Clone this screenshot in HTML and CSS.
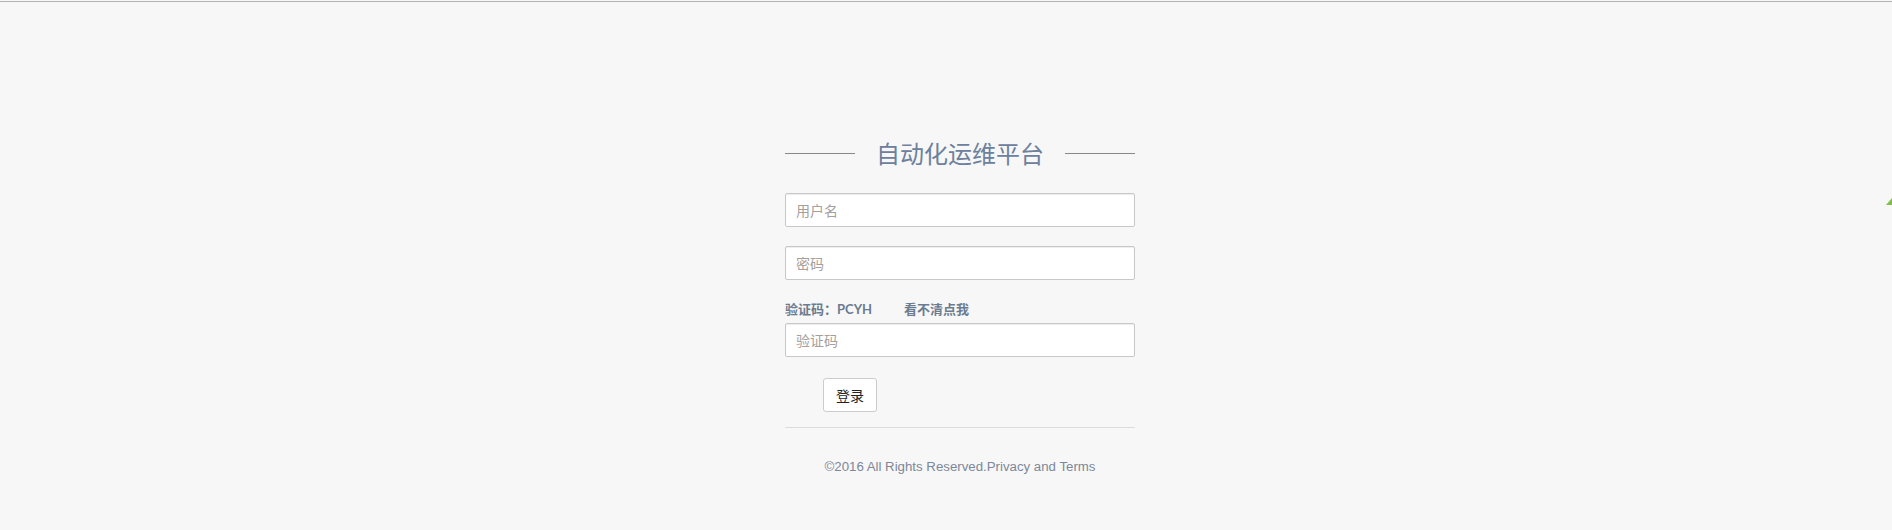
FILE: index.html
```html
<!DOCTYPE html>
<html lang="zh-CN">
<head>
<meta charset="utf-8">
<title>自动化运维平台</title>
<link rel="stylesheet" href="styles.css">
</head>
<body>
<div class="topline"></div>
<div class="login">
  <div class="title-row">
    <span class="title-line"></span>
    <h1 class="title">自动化运维平台</h1>
    <span class="title-line"></span>
  </div>
  <form class="form">
    <input class="field field-first" type="text" placeholder="用户名">
    <input class="field field-second" type="password" placeholder="密码">
    <div class="captcha-row">
      <span class="captcha-label">验证码：PCYH</span>
      <a class="captcha-refresh">看不清点我</a>
    </div>
    <input class="field field-captcha" type="text" placeholder="验证码">
    <button class="btn" type="button">登录</button>
  </form>
  <div class="divider"></div>
  <p class="footer">©2016 All Rights Reserved.Privacy and Terms</p>
</div>
<div class="leaf"></div>
</body>
</html>
```

FILE: styles.css
```css
html, body {
  margin: 0;
  padding: 0;
  background: #f7f7f7;
  height: 100%;
  overflow: hidden;
}
body {
  font-family: "Liberation Sans", Arial, "Noto Sans CJK SC", sans-serif;
  position: relative;
}
.topline {
  margin-top: 1px;
  height: 1px;
  background: #b3b3b3;
}
.login {
  width: 350px;
  margin-left: calc(50% - 161px);
}
.title-row {
  margin-top: 134px;
  height: 34px;
  display: flex;
  align-items: center;
  justify-content: space-between;
}
.title-line {
  width: 70px;
  height: 1px;
  background: #888;
}
.title {
  margin: 0;
  font-size: 24px;
  font-weight: normal;
  line-height: 34px;
  color: #6d809d;
  font-family: "Noto Sans CJK SC", sans-serif;
  letter-spacing: 0;
}
.form {
  display: flex;
  flex-direction: column;
  align-items: flex-start;
  margin: 0;
}
.field {
  box-sizing: border-box;
  width: 350px;
  height: 34px;
  padding: 0 10px;
  border: 1px solid #c8c8c8;
  border-radius: 2px;
  background: #fff;
  box-shadow: inset 0 1px 1px rgba(0,0,0,0.075);
  font-size: 14px;
  font-family: "Noto Sans CJK SC", sans-serif;
  color: #555;
  outline: none;
}
.field::placeholder {
  color: #a5a09b;
}
.field-first { margin-top: 23px; }
.field-second { margin-top: 19px; }
.captcha-row {
  margin-top: 19px;
  height: 20px;
  line-height: 20px;
  display: flex;
  gap: 32px;
  font-size: 13px;
  font-weight: bold;
  color: #6b7b90;
  font-family: "Lato", "Noto Sans CJK SC", sans-serif;
}
.captcha-refresh {
  color: #6b7b90;
  cursor: pointer;
}
.field-captcha { margin-top: 4px; }
.btn {
  margin-top: 21px;
  margin-left: 38px;
  width: 54px;
  height: 34px;
  background: #fff;
  border: 1px solid #ccc;
  border-radius: 3px;
  font-size: 14px;
  color: #222;
  font-family: "Noto Sans CJK SC", sans-serif;
  padding: 0;
}
.divider {
  margin-top: 15px;
  height: 1px;
  background: #dcdcdc;
}
.footer {
  margin: 29px 0 0;
  line-height: 20px;
  text-align: center;
  font-size: 13.25px;
  color: #7c8799;
}
.leaf {
  position: absolute;
  right: 0;
  top: 198px;
  width: 0;
  height: 0;
  border-left: 6px solid transparent;
  border-bottom: 7px solid #7dc242;
}
```
